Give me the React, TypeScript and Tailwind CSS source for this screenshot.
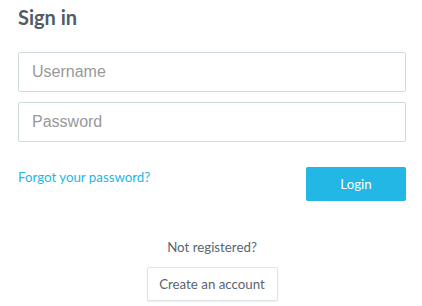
import React from "react";

export default function App() {
  return (
    <div className="min-h-screen bg-white pl-[18px] pr-[16px] pt-[5px] font-['Lato',sans-serif] text-[13.3px] text-[#58666e]">
      <h2 className="text-[20px] font-bold leading-[24px] text-[#505c66]">Sign in</h2>
      <form className="mt-[23px] flex flex-col" onSubmit={(e) => e.preventDefault()}>
        <div className="flex flex-col gap-[10px]">
          <input
            type="text"
            placeholder="Username"
            className="h-[40px] w-full rounded-[2px] border border-[#cfdadd] bg-white px-[13px] font-['Liberation_Sans',Arial,sans-serif] text-[16px] text-[#555] placeholder:text-[#999] outline-none"
          />
          <input
            type="password"
            placeholder="Password"
            className="h-[40px] w-full rounded-[2px] border border-[#cfdadd] bg-white px-[13px] font-['Liberation_Sans',Arial,sans-serif] text-[16px] text-[#555] placeholder:text-[#999] outline-none"
          />
        </div>
        <div className="mt-[25px] flex items-start justify-between">
          <a href="#" className="leading-[20px] text-[#23b7e5]">
            Forgot your password?
          </a>
          <button
            type="submit"
            className="flex h-[34px] w-[100px] items-center justify-center rounded-[2px] bg-[#23b7e5] leading-[20px] text-white"
          >
            Login
          </button>
        </div>
        <div className="mt-[36px] flex flex-col items-center">
          <p className="leading-[20px] text-[#58666e]">Not registered?</p>
          <button
            type="button"
            className="mt-[10px] flex h-[34px] w-[131px] items-center justify-center rounded-[2px] border border-[#dee5e7] bg-white leading-[20px] text-[#58666e] shadow-[0_1px_1px_rgba(90,90,90,0.1)]"
          >
            Create an account
          </button>
        </div>
      </form>
    </div>
  );
}
